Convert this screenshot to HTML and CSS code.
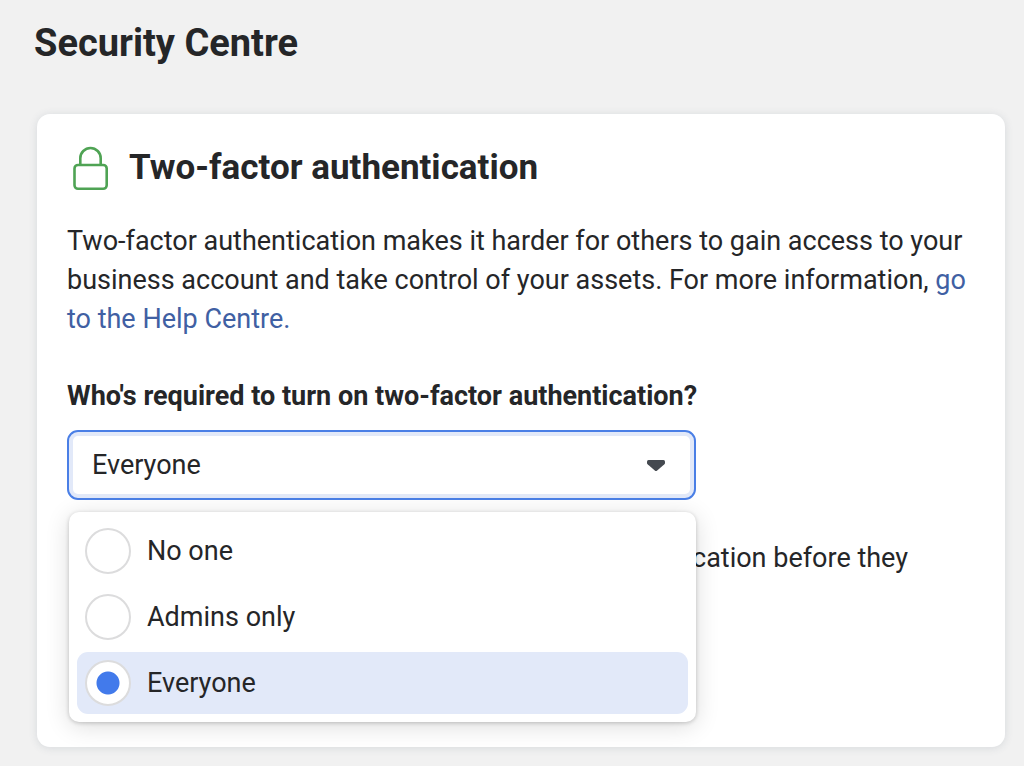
FILE: index.html
```html
<!DOCTYPE html>
<html lang="en">

<head>
    <meta charset="UTF-8">
    <meta name="viewport" content="width=device-width, initial-scale=1.0">
    <title>Security Centre</title>
    <link rel="stylesheet" href="styles.css">
</head>

<body>
    <main class="page">
        <h1>Security Centre</h1>

        <section class="card">
            <div class="card-head">
                <svg class="lock" viewBox="0 0 48 48" fill="none" stroke="#4fa354" stroke-width="2.600" aria-hidden="true">
                    <rect x="7.500" y="21" width="32.200" height="23.800" rx="3.500"/>
                    <path d="M13.300 21V14.200a10.200 10.200 0 0 1 20.400 0V21"/>
                </svg>
                <h2>Two-factor authentication</h2>
            </div>

            <p class="intro">Two-factor authentication makes it harder for others to gain access to your business account and take control of your assets. For more information, <a href="#">go to the Help Centre.</a></p>

            <label class="question" for="required">Who's required to turn on two-factor authentication?</label>
            <div class="picker">
                <div class="select-box">
                    <select id="required">
                        <option>No one</option>
                        <option>Admins only</option>
                        <option selected>Everyone</option>
                    </select>
                    <svg class="arrow" viewBox="0 0 18 11" aria-hidden="true">
                        <path d="M1.500 0h15Q18 0 18 1.500V3q0 .7-.6 1.300L10.200 10.500q-1.200 1-2.400 0L.6 4.300Q0 3.700 0 3V1.500Q0 0 1.500 0z" fill="#444950"/>
                    </svg>
                </div>

                <!-- open list, lies over the note below -->
                <div class="menu">
                    <label class="option"><input type="radio" name="who">No one</label>
                    <label class="option"><input type="radio" name="who">Admins only</label>
                    <label class="option active"><input type="radio" name="who" checked>Everyone</label>
                </div>
            </div>

            <p class="note">cation before they</p>
        </section>
    </main>

    <script>
        let select = document.querySelector('#required');
        let radios = document.querySelectorAll('.option input');

        // keep the list and the select box in step
        radios.forEach(function (radio, i) {
            radio.addEventListener('change', function () {
                document.querySelector('.option.active').classList.remove('active');
                radio.parentNode.classList.add('active');
                select.selectedIndex = i;
            });
        });

        select.addEventListener('change', function () {
            radios[select.selectedIndex].click();
        });
    </script>
</body>

</html>
```

FILE: styles.css
```css
* {
    box-sizing: border-box;
    margin: 0;
    padding: 0;
}

body {
    background: #f1f1f1;
    color: #252628;
    font-family: Roboto, "Liberation Sans", sans-serif;
    font-size: 27px;
    line-height: 39px;
}

.page {
    padding: 20px 19px 19px 34px;
}

h1 {
    font-size: 38px;
    line-height: 46px;
    font-weight: 700;
}

.card {
    margin-top: 48px;
    margin-left: 3px;
    padding: 30px;
    min-height: 633px;
    background: #fff;
    border-radius: 13px;
    box-shadow: 0 1px 8px rgba(60, 80, 100, 0.14);
}

.card-head {
    display: flex;
    align-items: center;
    gap: 14px;
}

.lock {
    width: 48px;
    height: 48px;
}

h2 {
    font-size: 35px;
    line-height: 48px;
    font-weight: 700;
}

.intro {
    margin-top: 30px;
}

.intro a {
    color: #4060a3;
    text-decoration: none;
}

.question {
    display: block;
    margin-top: 38px;
    font-weight: 700;
}

.picker {
    position: relative;
    max-width: 629px;
    margin-top: 14px;
}

.select-box {
    display: grid;
    align-items: center;
}

.select-box select,
.arrow {
    grid-area: 1 / 1;
}

.select-box select {
    appearance: none;
    width: 100%;
    height: 70px;
    padding: 0 23px;
    background: #fff;
    border: 2px solid #4a7fe6;
    border-radius: 11px;
    box-shadow: inset 0 0 0 4px #e2e9f9;
    color: inherit;
    font: inherit;
    outline: none;
}

.arrow {
    justify-self: end;
    width: 18px;
    height: 11px;
    margin-right: 31px;
    pointer-events: none;
}

.menu {
    position: absolute;
    top: 82px;
    left: 2px;
    right: 0;
    padding: 8px;
    background: #fff;
    border-radius: 10px;
    box-shadow: 0 1px 4px rgba(0, 0, 0, 0.2), 0 4px 24px rgba(0, 0, 0, 0.14);
}

.option {
    display: flex;
    align-items: center;
    gap: 16px;
    height: 62px;
    padding: 0 8px;
    border-radius: 11px;
}

.option + .option {
    margin-top: 4px;
}

.option.active {
    background: #e2e9f9;
}

.option input {
    appearance: none;
    width: 46px;
    height: 46px;
    background: #fff;
    border: 2px solid #dcdcdd;
    border-radius: 50%;
}

.option input:checked {
    background: radial-gradient(circle, #427aeb 11px, #fff 12px);
}

.note {
    margin-top: 39px;
    padding-left: 625px;
    white-space: nowrap;
}
```
